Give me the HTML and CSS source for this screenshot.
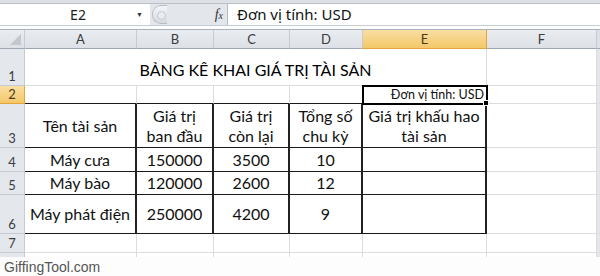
FILE: index.html
```html
<!DOCTYPE html>
<html>
<head>
	<meta charset="utf-8">
	<title>Bảng kê khai giá trị tài sản</title>
	<link rel="stylesheet" href="styles.css">
</head>
<body>

<div class="topstrip"></div>

<div class="formula-bar">
	<div class="namebox"><span class="ref">E2</span><span class="drop">&#9660;</span></div>
	<div class="fx-zone">
		<span class="grip"></span>
		<span class="fx"><i>f</i><i class="x">x</i></span>
	</div>
	<div class="formula">Đơn vị tính: USD</div>
</div>

<div class="sheet">
	<!-- column headers -->
	<div class="ch corner"><span class="tri"></span></div>
	<div class="ch">A</div>
	<div class="ch">B</div>
	<div class="ch">C</div>
	<div class="ch">D</div>
	<div class="ch sel">E</div>
	<div class="ch">F</div>
	<div class="ch end"></div>

	<!-- row 1 -->
	<div class="rh">1</div>
	<div class="c title">BẢNG KÊ KHAI GIÁ TRỊ TÀI SẢN</div>
	<div class="c"></div>
	<div class="c end"></div>

	<!-- row 2 -->
	<div class="rh sel">2</div>
	<div class="c bb"></div>
	<div class="c bb"></div>
	<div class="c bb"></div>
	<div class="c bb"></div>
	<div class="c bb active">Đơn vị tính: USD</div>
	<div class="c"></div>
	<div class="c end"></div>

	<!-- row 3 -->
	<div class="rh">3</div>
	<div class="c t">Tên tài sản</div>
	<div class="c t">Giá trị<br>ban đầu</div>
	<div class="c t">Giá trị<br>còn lại</div>
	<div class="c t">Tổng số<br>chu kỳ</div>
	<div class="c t">Giá trị khấu hao<br>tài sản</div>
	<div class="c"></div>
	<div class="c end"></div>

	<!-- row 4 -->
	<div class="rh">4</div>
	<div class="c t">Máy cưa</div>
	<div class="c t">150000</div>
	<div class="c t">3500</div>
	<div class="c t">10</div>
	<div class="c t"></div>
	<div class="c"></div>
	<div class="c end"></div>

	<!-- row 5 -->
	<div class="rh">5</div>
	<div class="c t">Máy bào</div>
	<div class="c t">120000</div>
	<div class="c t">2600</div>
	<div class="c t">12</div>
	<div class="c t"></div>
	<div class="c"></div>
	<div class="c end"></div>

	<!-- row 6 -->
	<div class="rh">6</div>
	<div class="c t">Máy phát điện</div>
	<div class="c t">250000</div>
	<div class="c t">4200</div>
	<div class="c t">9</div>
	<div class="c t"></div>
	<div class="c"></div>
	<div class="c end"></div>

	<!-- row 7 -->
	<div class="rh">7</div>
	<div class="c"></div>
	<div class="c"></div>
	<div class="c"></div>
	<div class="c"></div>
	<div class="c"></div>
	<div class="c"></div>
	<div class="c end"></div>

	<!-- cut-off row -->
	<div class="rh cut"></div>
	<div class="c cut"></div>
	<div class="c cut"></div>
	<div class="c cut"></div>
	<div class="c cut"></div>
	<div class="c cut"></div>
	<div class="c cut"></div>
	<div class="c cut end"></div>
</div>

<div class="watermark">GiffingTool.com</div>

</body>
</html>
```

FILE: styles.css
```css
html, body {
	margin: 0;
	padding: 0;
	background: #fdfdfd;
	width: 600px;
	height: 276px;
	overflow: hidden;
}

body {
	font-family: Lato, "Noto Sans", sans-serif;
	color: #000;
}

/* ribbon remains + formula bar */
.topstrip {
	height: 3px;
	background: #dde1e6;
	border-bottom: 1px solid #b9c0c9;
}

.formula-bar {
	display: flex;
	height: 21px;
	background: #e3e6ea;
	border-bottom: 1px solid #c6ccd4;
}

.namebox {
	width: 150px;
	background: #fff;
	display: flex;
	align-items: center;
	font-size: 14px;
	font-family: "Noto Sans", sans-serif;
	color: #1c1c1c;
}

.namebox .ref {
	flex: 1;
	text-align: center;
	padding-left: 20px;
}

.namebox .drop {
	font-size: 7px;
	color: #333;
	width: 14px;
}

.fx-zone {
	width: 77px;
	display: flex;
	align-items: center;
	justify-content: space-between;
	border-right: 1px solid #b5bcc6;
}

.grip {
	width: 14px;
	height: 17px;
	margin-left: 2px;
	border-radius: 9px 0 0 9px;
	background: linear-gradient(#f4f5f7, #d6dadf);
	border: 1px solid #b8bec6;
	border-right: 0;
	position: relative;
}

.grip::after {
	content: "";
	position: absolute;
	left: 4px;
	top: 5px;
	width: 7px;
	height: 7px;
	border-radius: 50%;
	background: #e9ecef;
	border: 1px solid #c4c9cf;
}

.fx {
	font-family: "Liberation Serif", serif;
	font-size: 14px;
	color: #333;
	margin-right: 4px;
}

.fx .x {
	font-size: 10px;
}

.formula {
	flex: 1;
	background: #fff;
	padding-left: 9px;
	font-size: 15px;
	font-family: "Noto Sans", sans-serif;
	line-height: 21px;
	color: #111;
}

/* the grid */
.sheet {
	margin-top: 3px;
	border-top: 1px solid #a9b0ba;
	display: grid;
	grid-template-columns: 25px 112px 77px 76px 73px 124px 110px 3px;
	grid-template-rows: 19px 37px 18px 44px 24px 23px 39px 19px 4px;
	background: #fff;
}

.ch {
	box-sizing: border-box;
	background: linear-gradient(#e9ecf0, #dde1e7);
	border-right: 1px solid #c5cbd3;
	border-bottom: 1px solid #9ea6b1;
	display: flex;
	align-items: center;
	justify-content: center;
	font-size: 13px;
	color: #3b3b3b;
}

.ch.corner {
	position: relative;
}

.tri {
	position: absolute;
	right: 3px;
	bottom: 3px;
	width: 0;
	height: 0;
	border-left: 11px solid transparent;
	border-bottom: 11px solid #c3c8cf;
}

.ch.sel, .rh.sel {
	background: linear-gradient(#f9dfa3, #f3c868);
	border-color: #e8a33b;
	color: #4b3a17;
}

.ch.end {
	background: #dde1e7;
	border-right: 0;
}

.rh {
	box-sizing: border-box;
	background: #e4e8ed;
	border-right: 1px solid #c5cbd3;
	border-bottom: 1px solid #c5cbd3;
	font-size: 13px;
	color: #3b3b3b;
	display: flex;
	align-items: flex-end;
	justify-content: center;
	padding-bottom: 1px;
}

.c {
	box-sizing: border-box;
	border-right: 1px solid #dcdcdc;
	border-bottom: 1px solid #dcdcdc;
	font-size: 16px;
}

.c.end {
	border-right: 0;
	background: #e3e6ea;
}

.title {
	grid-column: span 5;
	display: flex;
	align-items: center;
	justify-content: center;
	font-size: 16px;
	padding-top: 4px;
}

.bb {
	border-bottom-color: #1a1a1a;
}

.t {
	border-right: 2px solid #222;
	border-bottom-color: #1a1a1a;
	display: flex;
	align-items: center;
	justify-content: center;
	text-align: center;
	line-height: 20px;
	color: #111;
}

.active {
	position: relative;
	outline: 2px solid #000;
	outline-offset: -1px;
	z-index: 1;
	font-size: 12.5px;
	text-align: right;
	padding-right: 2px;
	line-height: 18px;
	color: #111;
}

.active::after {
	content: "";
	position: absolute;
	right: -3px;
	bottom: -3px;
	width: 4px;
	height: 4px;
	background: #000;
	border: 1px solid #fff;
}

.cut {
	border-bottom: 0;
}

.rh.cut {
	border-bottom: 0;
}

.watermark {
	font-family: "Liberation Sans", Arial, sans-serif;
	font-size: 14px;
	color: #555;
	padding: 2px 0 0 4px;
	background: #fdfdfd;
}
```
